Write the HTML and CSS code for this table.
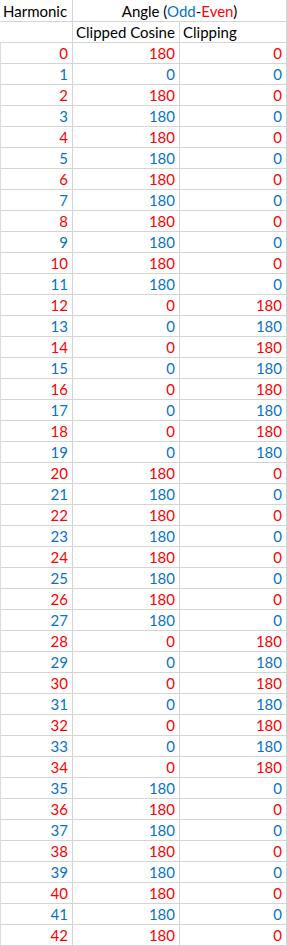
FILE: index.html
```html
<!DOCTYPE html>
<html>
<head>
<meta charset="utf-8">
<link rel="stylesheet" href="styles.css">
</head>
<body>
<div class="sheet">
  <div class="c h1">Harmonic</div>
  <div class="c h1 span">Angle (<span class="b">Odd</span>-<span class="r">Even</span>)</div>
  <div class="c"></div>
  <div class="c">Clipped Cosine</div>
  <div class="c">Clipping</div>

  <div class="c first n r">0</div><div class="c n r">180</div><div class="c n r">0</div>
  <div class="c first n b">1</div><div class="c n b">0</div><div class="c n b">0</div>
  <div class="c first n r">2</div><div class="c n r">180</div><div class="c n r">0</div>
  <div class="c first n b">3</div><div class="c n b">180</div><div class="c n b">0</div>
  <div class="c first n r">4</div><div class="c n r">180</div><div class="c n r">0</div>
  <div class="c first n b">5</div><div class="c n b">180</div><div class="c n b">0</div>
  <div class="c first n r">6</div><div class="c n r">180</div><div class="c n r">0</div>
  <div class="c first n b">7</div><div class="c n b">180</div><div class="c n b">0</div>
  <div class="c first n r">8</div><div class="c n r">180</div><div class="c n r">0</div>
  <div class="c first n b">9</div><div class="c n b">180</div><div class="c n b">0</div>
  <div class="c first n r">10</div><div class="c n r">180</div><div class="c n r">0</div>
  <div class="c first n b">11</div><div class="c n b">180</div><div class="c n b">0</div>
  <div class="c first n r">12</div><div class="c n r">0</div><div class="c n r">180</div>
  <div class="c first n b">13</div><div class="c n b">0</div><div class="c n b">180</div>
  <div class="c first n r">14</div><div class="c n r">0</div><div class="c n r">180</div>
  <div class="c first n b">15</div><div class="c n b">0</div><div class="c n b">180</div>
  <div class="c first n r">16</div><div class="c n r">0</div><div class="c n r">180</div>
  <div class="c first n b">17</div><div class="c n b">0</div><div class="c n b">180</div>
  <div class="c first n r">18</div><div class="c n r">0</div><div class="c n r">180</div>
  <div class="c first n b">19</div><div class="c n b">0</div><div class="c n b">180</div>
  <div class="c first n r">20</div><div class="c n r">180</div><div class="c n r">0</div>
  <div class="c first n b">21</div><div class="c n b">180</div><div class="c n b">0</div>
  <div class="c first n r">22</div><div class="c n r">180</div><div class="c n r">0</div>
  <div class="c first n b">23</div><div class="c n b">180</div><div class="c n b">0</div>
  <div class="c first n r">24</div><div class="c n r">180</div><div class="c n r">0</div>
  <div class="c first n b">25</div><div class="c n b">180</div><div class="c n b">0</div>
  <div class="c first n r">26</div><div class="c n r">180</div><div class="c n r">0</div>
  <div class="c first n b">27</div><div class="c n b">180</div><div class="c n b">0</div>
  <div class="c first n r">28</div><div class="c n r">0</div><div class="c n r">180</div>
  <div class="c first n b">29</div><div class="c n b">0</div><div class="c n b">180</div>
  <div class="c first n r">30</div><div class="c n r">0</div><div class="c n r">180</div>
  <div class="c first n b">31</div><div class="c n b">0</div><div class="c n b">180</div>
  <div class="c first n r">32</div><div class="c n r">0</div><div class="c n r">180</div>
  <div class="c first n b">33</div><div class="c n b">0</div><div class="c n b">180</div>
  <div class="c first n r">34</div><div class="c n r">0</div><div class="c n r">180</div>
  <div class="c first n b">35</div><div class="c n b">180</div><div class="c n b">0</div>
  <div class="c first n r">36</div><div class="c n r">180</div><div class="c n r">0</div>
  <div class="c first n b">37</div><div class="c n b">180</div><div class="c n b">0</div>
  <div class="c first n r">38</div><div class="c n r">180</div><div class="c n r">0</div>
  <div class="c first n b">39</div><div class="c n b">180</div><div class="c n b">0</div>
  <div class="c first n r">40</div><div class="c n r">180</div><div class="c n r">0</div>
  <div class="c first n b">41</div><div class="c n b">180</div><div class="c n b">0</div>
  <div class="c first n r">42</div><div class="c n r">180</div><div class="c n r">0</div>
</div>
</body>
</html>
```

FILE: styles.css
```css
html, body {
  margin: 0;
  padding: 0;
  background: #ffffff;
}

.sheet {
  display: grid;
  grid-template-columns: 73px 107px 107px;
  width: 287px;
  font-family: Lato, "Liberation Sans", sans-serif;
  font-size: 15px;
  color: #000000;
}

.c {
  height: 20px;
  line-height: 20px;
  border-right: 1px solid #d4d4d4;
  border-bottom: 1px solid #d4d4d4;
  padding: 0 3px 0 3px;
  white-space: nowrap;
  overflow: hidden;
}

.c.first {
  border-left: 1px solid #dcdcdc;
}

.c.h1 {
  height: 21px;
  line-height: 22px;
}

.c.span {
  grid-column: span 2;
  text-align: center;
}

.c.n {
  text-align: right;
  padding-right: 4px;
}

.r { color: #ff0000; }
.b { color: #0a72c6; }
```
